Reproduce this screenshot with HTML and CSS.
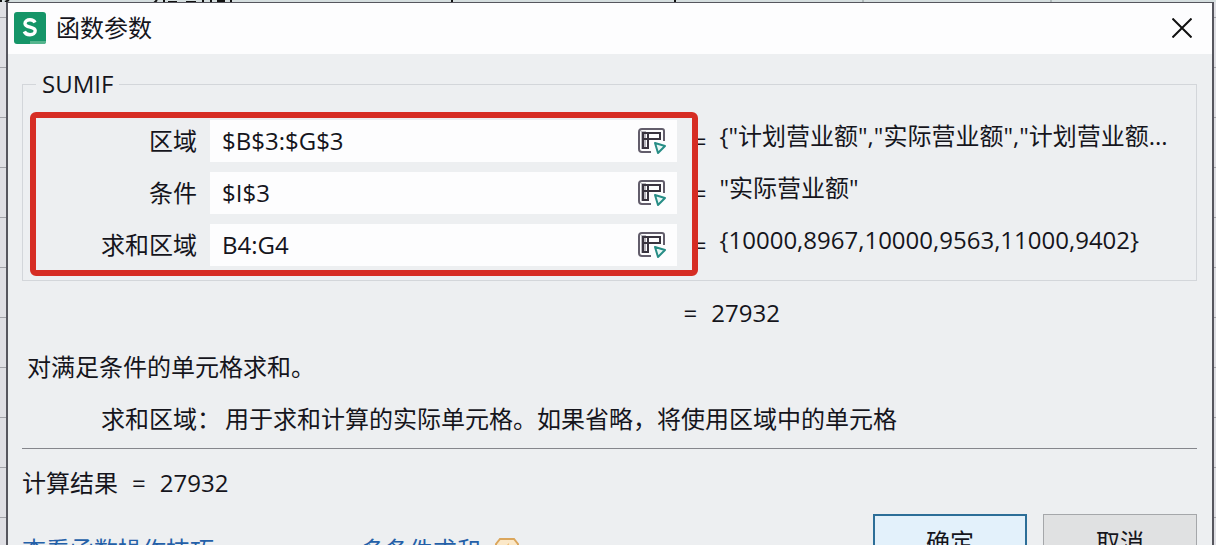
FILE: index.html
```html
<!DOCTYPE html>
<html lang="zh-CN">
<head>
    <meta charset="UTF-8">
    <meta name="viewport" content="width=device-width, initial-scale=1.0">
    <title>函数参数</title>
    <link rel="stylesheet" href="styles.css">
</head>
<body>
    <!-- Sheet behind the dialog -->
    <div class="sheet-top">
        <svg width="1216" height="4" viewBox="0 0 1216 4">
            <path d="M0 1h2M5 2l4-2M154 3l3-3M164 0v3M168 2h9M186 2h10M203 0v3M211 0v3M217 1h8M231 0v3M452 0v4M675 0v4" stroke="#111" stroke-width="2" fill="none"/>
            <path d="M863 0v4M1051 0v4" stroke="#8b9596" fill="none"/>
        </svg>
    </div>

    <main class="dialog">
        <header class="title-bar">
            <svg class="logo" viewBox="0 0 32 32">
                <rect width="32" height="32" rx="3" fill="#159568"/>
                <path d="M16 29h16v1a2 2 0 0 1-2 2H16z" fill="#55b58e"/>
                <path d="M21 10.500C20 8.500 18 7.800 16 7.800c-3 0-5 1.400-5 3.700 0 5 10.200 2.400 10.200 7.300 0 2.400-2.200 3.900-5.200 3.900-2.600 0-4.800-1-5.700-3.200" fill="none" stroke="#fff" stroke-width="3.400"/>
            </svg>
            <h1>函数参数</h1>
            <button class="close" type="button" aria-label="关闭">
                <svg viewBox="0 0 20 20">
                    <path d="M0.500 0.500l19 19M19.500 0.500l-19 19" stroke="#111" stroke-width="2" fill="none"/>
                </svg>
            </button>
        </header>

        <form class="content">
            <fieldset>
                <legend>SUMIF</legend>
                <div class="args">
                    <div class="highlight"></div>

                    <label class="r1" for="range">区域</label>
                    <div class="field r1">
                        <input id="range" type="text" value="$B$3:$G$3">
                        <button class="pick" type="button" aria-label="选择区域">
                            <svg viewBox="0 0 30 28"><use href="#pick-icon"/></svg>
                        </button>
                    </div>
                    <span class="eq r1">=</span>
                    <output class="value r1">{"计划营业额","实际营业额","计划营业额...</output>

                    <label class="r2" for="criteria">条件</label>
                    <div class="field r2">
                        <input id="criteria" type="text" value="$I$3">
                        <button class="pick" type="button" aria-label="选择条件">
                            <svg viewBox="0 0 30 28"><use href="#pick-icon"/></svg>
                        </button>
                    </div>
                    <span class="eq r2">=</span>
                    <output class="value r2">"实际营业额"</output>

                    <label class="r3" for="sum-range">求和区域</label>
                    <div class="field r3">
                        <input id="sum-range" type="text" value="B4:G4">
                        <button class="pick" type="button" aria-label="选择求和区域">
                            <svg viewBox="0 0 30 28"><use href="#pick-icon"/></svg>
                        </button>
                    </div>
                    <span class="eq r3">=</span>
                    <output class="value r3">{10000,8967,10000,9563,11000,9402}</output>
                </div>
            </fieldset>

            <div class="total"><span>=</span><output>27932</output></div>
            <p class="summary">对满足条件的单元格求和。</p>
            <p class="param"><span>求和区域：</span><span>用于求和计算的实际单元格。如果省略，将使用区域中的单元格</span></p>
            <hr>
            <div class="result"><span>计算结果</span><span>=</span><output>27932</output></div>

            <footer>
                <a class="tips" href="#">查看函数操作技巧</a>
                <a class="more" href="#">多条件求和
                    <svg viewBox="0 0 24 24">
                        <path d="M5 1h14l4 5v12l-4 5H5l-4-5V6z" fill="#fbe8c8" stroke="#dba65c" stroke-width="2"/>
                        <path d="M14 5l-7 8h5l-2 6 7-8h-5z" fill="#e89a2c"/>
                    </svg>
                </a>
                <div class="buttons">
                    <button class="btn primary" type="button">确定</button>
                    <button class="btn" type="button">取消</button>
                </div>
            </footer>
        </form>
    </main>

    <svg class="defs">
        <symbol id="pick-icon" viewBox="0 0 30 28">
            <path d="M14 25H5a3 3 0 0 1-3-3V5a3 3 0 0 1 3-3h20a2 2 0 0 1 2 2v10" fill="none" stroke="#625d6b" stroke-width="2"/>
            <path d="M4 4h5v18H4z" fill="#b9b7bf"/>
            <path d="M6 6h17v6H11v9H6zM11 6v6M6 12h5" fill="none" stroke="#39343f" stroke-width="2"/>
            <path d="M18 16l10 3-7 7z" fill="#eaf8f6" stroke="#278d86" stroke-width="2" stroke-linejoin="round"/>
        </symbol>
    </svg>
</body>
</html>
```

FILE: styles.css
```css
* {
    box-sizing: border-box;
}
body {
    margin: 0;
    height: 100vh;
    overflow: hidden;
    display: flex;
    flex-direction: column;
    font-family: "Open Sans", "Noto Sans CJK SC", sans-serif;
    font-size: 24px;
    line-height: 32px;
    color: #15151c;
    background: repeating-linear-gradient(to bottom, #dfdfe4 0, #dfdfe4 17px, #a3a3a9 17px, #a3a3a9 18px, #dfdfe4 18px, #dfdfe4 50px);
}
.sheet-top {
    height: 2px;
    flex: none;
    overflow: hidden;
    background: #d5dedf;
}
.sheet-top svg,
.title-bar svg,
.pick svg {
    display: block;
}
.defs {
    display: none;
}
/* Dialog window */
.dialog {
    flex: 1 0 auto;
    margin: 0 2px 0 6px;
    border: 2px solid #56565e;
    border-top-width: 1px;
    border-bottom: none;
    background: #edeff1;
}
.title-bar {
    display: flex;
    align-items: center;
    gap: 10px;
    height: 51px;
    padding: 0 20px 2px 6px;
    background: #fdfdfe;
}
.logo {
    width: 32px;
    height: 32px;
}
h1 {
    margin: 0;
    font-size: 24px;
    font-weight: 400;
}
.close {
    margin-left: auto;
    padding: 0;
    border: none;
    background: none;
}
.close svg {
    width: 20px;
    height: 20px;
}
.content {
    padding: 14px 15px 0 14px;
}
fieldset {
    min-width: 0;
    margin: 0;
    padding: 20px 10px 14px;
    border: 1px solid #d3d6da;
}
legend {
    margin-left: 3px;
    padding: 0 6px;
}
/* Function arguments */
.args {
    display: grid;
    grid-template-columns: 164px minmax(0, 1fr) 17px minmax(0, 1fr);
    grid-template-rows: repeat(3, 42px);
    gap: 10px 13px;
    align-items: center;
}
.r1 { grid-row: 1; }
.r2 { grid-row: 2; }
.r3 { grid-row: 3; }
.args label {
    grid-column: 1;
    text-align: right;
}
.field {
    grid-column: 2;
    display: flex;
    align-items: center;
    height: 42px;
    padding: 0 10px 0 12px;
    background: #fdfdfe;
}
.field input {
    flex: 1;
    min-width: 0;
    padding: 0;
    border: none;
    outline: none;
    background: none;
    font: inherit;
    color: inherit;
}
.pick {
    padding: 0;
    border: none;
    background: none;
}
.pick svg {
    width: 30px;
    height: 28px;
}
.eq {
    grid-column: 3;
    text-align: right;
}
.value {
    grid-column: 4;
    padding-bottom: 10px;
    white-space: nowrap;
}
.highlight {
    grid-area: 1 / 1 / 4 / 3;
    align-self: stretch;
    margin: -8px -21px -10px -3px;
    border: 6px solid #d62d24;
    border-radius: 6px;
    z-index: 1;
    pointer-events: none;
}
/* Result and help text */
.total {
    display: flex;
    gap: 14px;
    margin: 16px 0 0 calc(50% + 74px);
}
p {
    margin: 0;
}
.summary {
    margin-top: 22px;
    padding-left: 5px;
}
.param {
    display: flex;
    gap: 4px;
    margin-top: 20px;
    padding-left: 79px;
}
hr {
    margin: 13px 0 18px;
    border: none;
    border-top: 1px solid #85868c;
}
.result {
    display: flex;
    gap: 14px;
}
/* Footer */
footer {
    display: flex;
    align-items: flex-start;
    margin-top: 15px;
}
footer a {
    margin-top: 20px;
    color: #2460a8;
    text-decoration: none;
}
.more {
    display: flex;
    align-items: center;
    gap: 14px;
    margin-left: 147px;
}
.more svg {
    width: 24px;
    height: 24px;
}
.buttons {
    display: flex;
    gap: 16px;
    margin-left: auto;
}
.btn {
    width: 154px;
    height: 56px;
    padding: 0;
    border: 1px solid #a5a7aa;
    background: #e0e1e2;
    font: inherit;
    color: inherit;
}
.primary {
    border: 2px solid #2c6e98;
    background: #e3f1fb;
}
```
